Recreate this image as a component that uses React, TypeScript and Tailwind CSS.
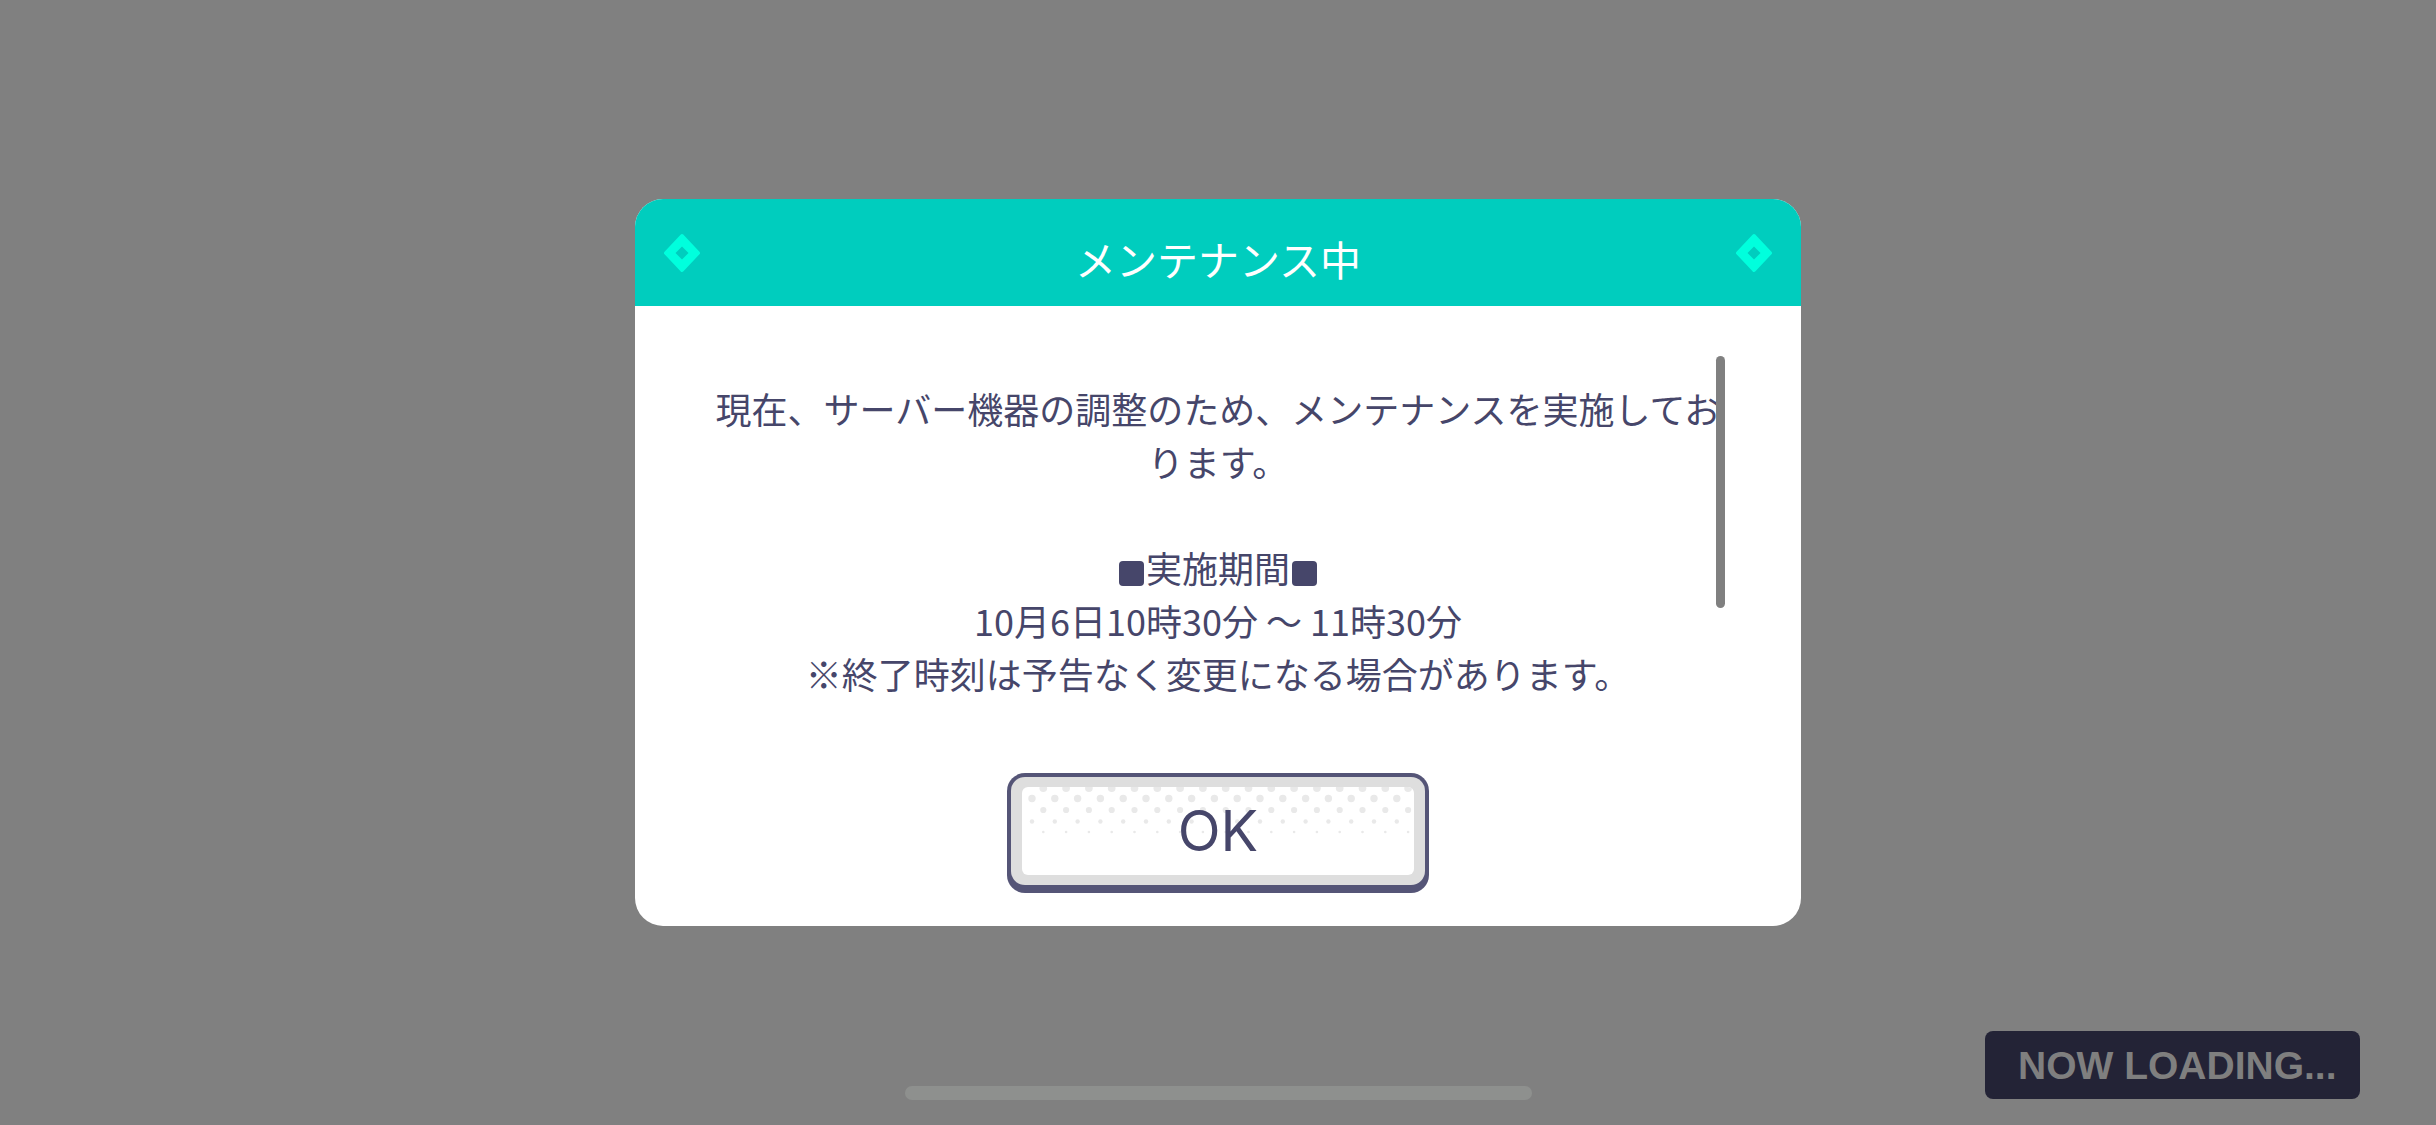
import React from "react";

const Diamond = () => (
  <svg width="38" height="40" viewBox="0 0 38 40" className="shrink-0">
    <polygon
      points="19,3 35,20 19,37 3,20"
      fill="#00FFDD"
      stroke="#00FFDD"
      strokeWidth="4"
      strokeLinejoin="round"
    />
    <polygon points="19,13.5 25.5,20 19,26.5 12.5,20" fill="#00CDBE" />
  </svg>
);

const Dots = () => {
  const rows = [
    { y: 1.3, r: 3.8, off: 21.3 },
    { y: 11.5, r: 3.7, off: 10.0 },
    { y: 23, r: 3.1, off: 21.3 },
    { y: 34.5, r: 2.2, off: 10.0 },
    { y: 45, r: 1.3, off: 21.3 },
  ];
  const circles: React.ReactElement[] = [];
  rows.forEach((row, ri) => {
    for (let x = row.off; x < 392; x += 22.8) {
      circles.push(
        <circle key={`${ri}-${x}`} cx={x} cy={row.y} r={row.r} fill="#E9E9E9" />
      );
    }
  });
  return (
    <svg
      width="392"
      height="88"
      viewBox="0 0 392 88"
      className="absolute inset-0 pointer-events-none"
    >
      {circles}
    </svg>
  );
};

const Square = () => (
  <span className="inline-block w-[25px] h-[25px] rounded-[4px] bg-[#46466A] mx-[1.5px] align-[-3px]" />
);

export default function App() {
  return (
    <div
      className="relative w-[2436px] h-[1125px] bg-[#808080] flex items-center justify-center overflow-hidden"
      style={{ fontFamily: '"Noto Sans CJK JP", "Noto Sans", sans-serif' }}
    >
      <div className="relative w-[1166px] h-[727px] bg-white rounded-[28px] overflow-hidden flex flex-col">
        {/* Header */}
        <div className="h-[107px] shrink-0 bg-[#00CDBE] flex items-center px-[28px]">
          <Diamond />
          <div className="flex-1 text-center text-white text-[41px] leading-[50px] pt-[10px]">
            メンテナンス中
          </div>
          <Diamond />
        </div>

        {/* Body */}
        <div className="relative flex-1 flex flex-col items-center pt-[76px]">
          <div className="w-[1012px] text-center text-[#46466A] text-[36px] leading-[53px]">
            <p>現在、サーバー機器の調整のため、メンテナンスを実施しております。</p>
            <p>&nbsp;</p>
            <p>
              <Square />
              実施期間
              <Square />
            </p>
            <p>10月6日10時30分 〜 11時30分</p>
            <p>※終了時刻は予告なく変更になる場合があります。</p>
          </div>

          {/* OK Button */}
          <div className="mt-[73px] w-[422px] h-[120px] bg-[#555577] rounded-[18px] pt-[4px] px-[4px] pb-[8px]">
            <div className="w-full h-full bg-[#DEDEDE] rounded-[14px] pt-[10px] px-[11px] pb-[10px]">
              <div className="relative w-full h-full bg-white rounded-[6px] overflow-hidden flex items-center justify-center">
                <Dots />
                <span
                  className="relative text-[56px] leading-none text-[#46466A]"
                  style={{ fontFamily: 'Inter, "Noto Sans", sans-serif' }}
                >
                  OK
                </span>
              </div>
            </div>
          </div>

          {/* Scrollbar */}
          <div className="absolute left-[1081px] top-[50px] w-[9px] h-[252px] rounded-full bg-[#808080]" />
        </div>
      </div>

      {/* Now loading */}
      <div className="absolute right-[76px] bottom-[26px] w-[375px] h-[68px] rounded-[8px] bg-[#232336] flex items-center pl-[33px]">
        <span
          className="text-[39px] font-bold text-[#7F7F7F] leading-none"
          style={{ fontFamily: '"Liberation Sans", Arial, sans-serif' }}
        >
          NOW LOADING...
        </span>
      </div>

      {/* Home indicator */}
      <div className="absolute left-[905px] bottom-[25px] w-[627px] h-[14px] rounded-full bg-[#8E908E]" />
    </div>
  );
}
